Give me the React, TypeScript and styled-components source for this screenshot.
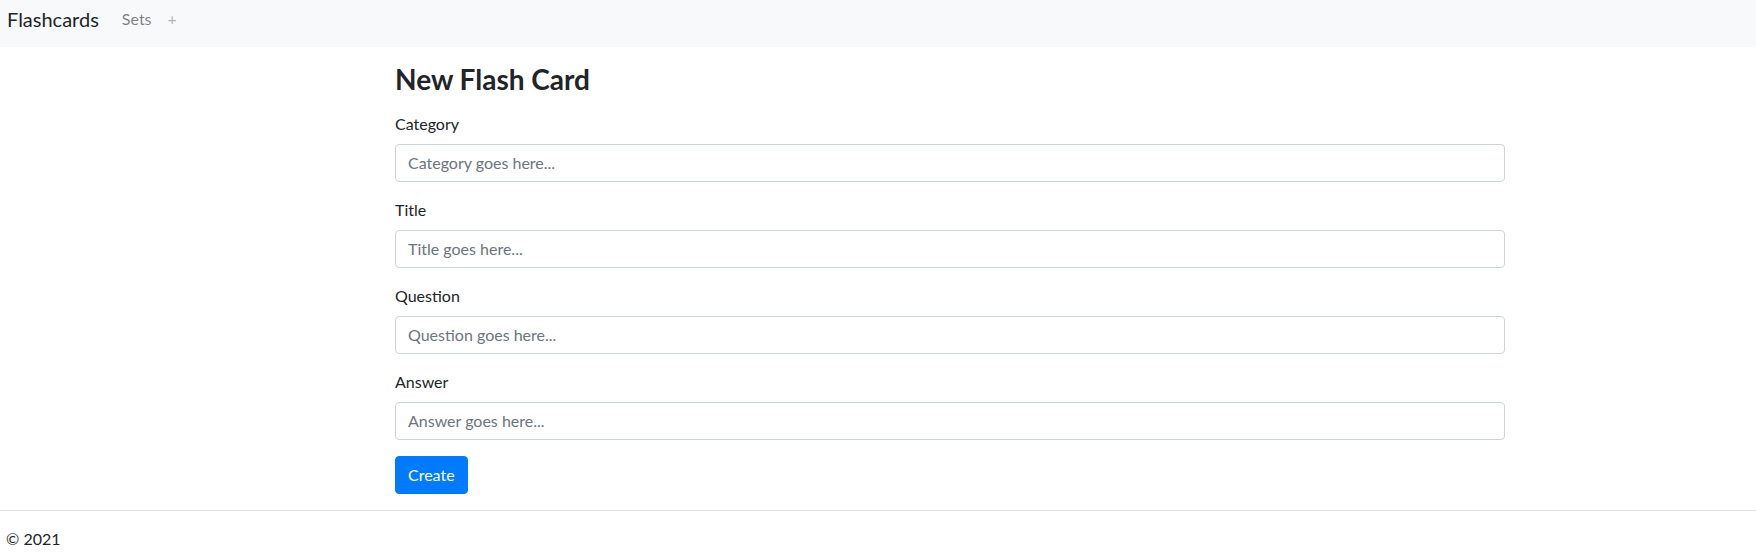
import styled, { createGlobalStyle } from "styled-components";

const GlobalStyle = createGlobalStyle`
  *, *::before, *::after {
    box-sizing: border-box;
  }

  body {
    margin: 0;
    background-color: #fff;
    color: #212529;
    font-family: Lato, "Open Sans", sans-serif;
    font-size: 16px;
    line-height: 1.5;
  }
`;

const Navbar = styled.nav`
  display: flex;
  flex-direction: row;
  align-items: flex-start;
  height: 47px;
  padding: 4px 7px 0;
  background-color: #f8f9fa;
`;

const Brand = styled.a`
  font-size: 20px;
  line-height: 30px;
  color: #212529;
  text-decoration: none;
  margin-right: 15px;
`;

const NavLink = styled.a<{ $muted?: boolean }>`
  padding: 3px 8px 0;
  font-size: 16px;
  line-height: 24px;
  color: ${(p) => (p.$muted ? "rgba(0, 0, 0, 0.3)" : "rgba(0, 0, 0, 0.5)")};
  text-decoration: none;
`;

const Main = styled.main`
  width: 1140px;
  margin-left: 380px;
  padding: 16px 15px 16px;
`;

const Title = styled.h3`
  margin: 0 0 15px;
  font-size: 28px;
  font-weight: 700;
  line-height: 1.2;
`;

const FormGroup = styled.div`
  margin-bottom: 16px;
`;

const Label = styled.label`
  display: inline-block;
  margin-bottom: 8px;
`;

const Input = styled.input`
  display: block;
  width: 100%;
  height: 38px;
  padding: 6px 12px;
  font-family: inherit;
  font-size: 16px;
  line-height: 1.5;
  color: #495057;
  background-color: #fff;
  border: 1px solid #ced4da;
  border-radius: 4px;

  &::placeholder {
    color: #6c757d;
    opacity: 1;
  }
`;

const Button = styled.button`
  display: inline-block;
  padding: 6px 12px;
  font-family: inherit;
  font-size: 16px;
  line-height: 1.5;
  color: #fff;
  background-color: #007bff;
  border: 1px solid #007bff;
  border-radius: 4px;
  cursor: pointer;
`;

const Footer = styled.footer`
  border-top: 1px solid #dee2e6;
  padding: 16px 6px;
`;

const fields = [
  { id: "category", label: "Category" },
  { id: "title", label: "Title" },
  { id: "question", label: "Question" },
  { id: "answer", label: "Answer" },
];

const App = () => {
  return (
    <>
      <GlobalStyle />
      <Navbar>
        <Brand href="#">Flashcards</Brand>
        <NavLink href="#">Sets</NavLink>
        <NavLink href="#" $muted>
          +
        </NavLink>
      </Navbar>
      <Main>
        <Title>New Flash Card</Title>
        <form onSubmit={(e) => e.preventDefault()}>
          {fields.map((f) => (
            <FormGroup key={f.id}>
              <Label htmlFor={f.id}>{f.label}</Label>
              <Input id={f.id} placeholder={`${f.label} goes here...`} />
            </FormGroup>
          ))}
          <Button type="submit">Create</Button>
        </form>
      </Main>
      <Footer>© 2021</Footer>
    </>
  );
};

export default App;
